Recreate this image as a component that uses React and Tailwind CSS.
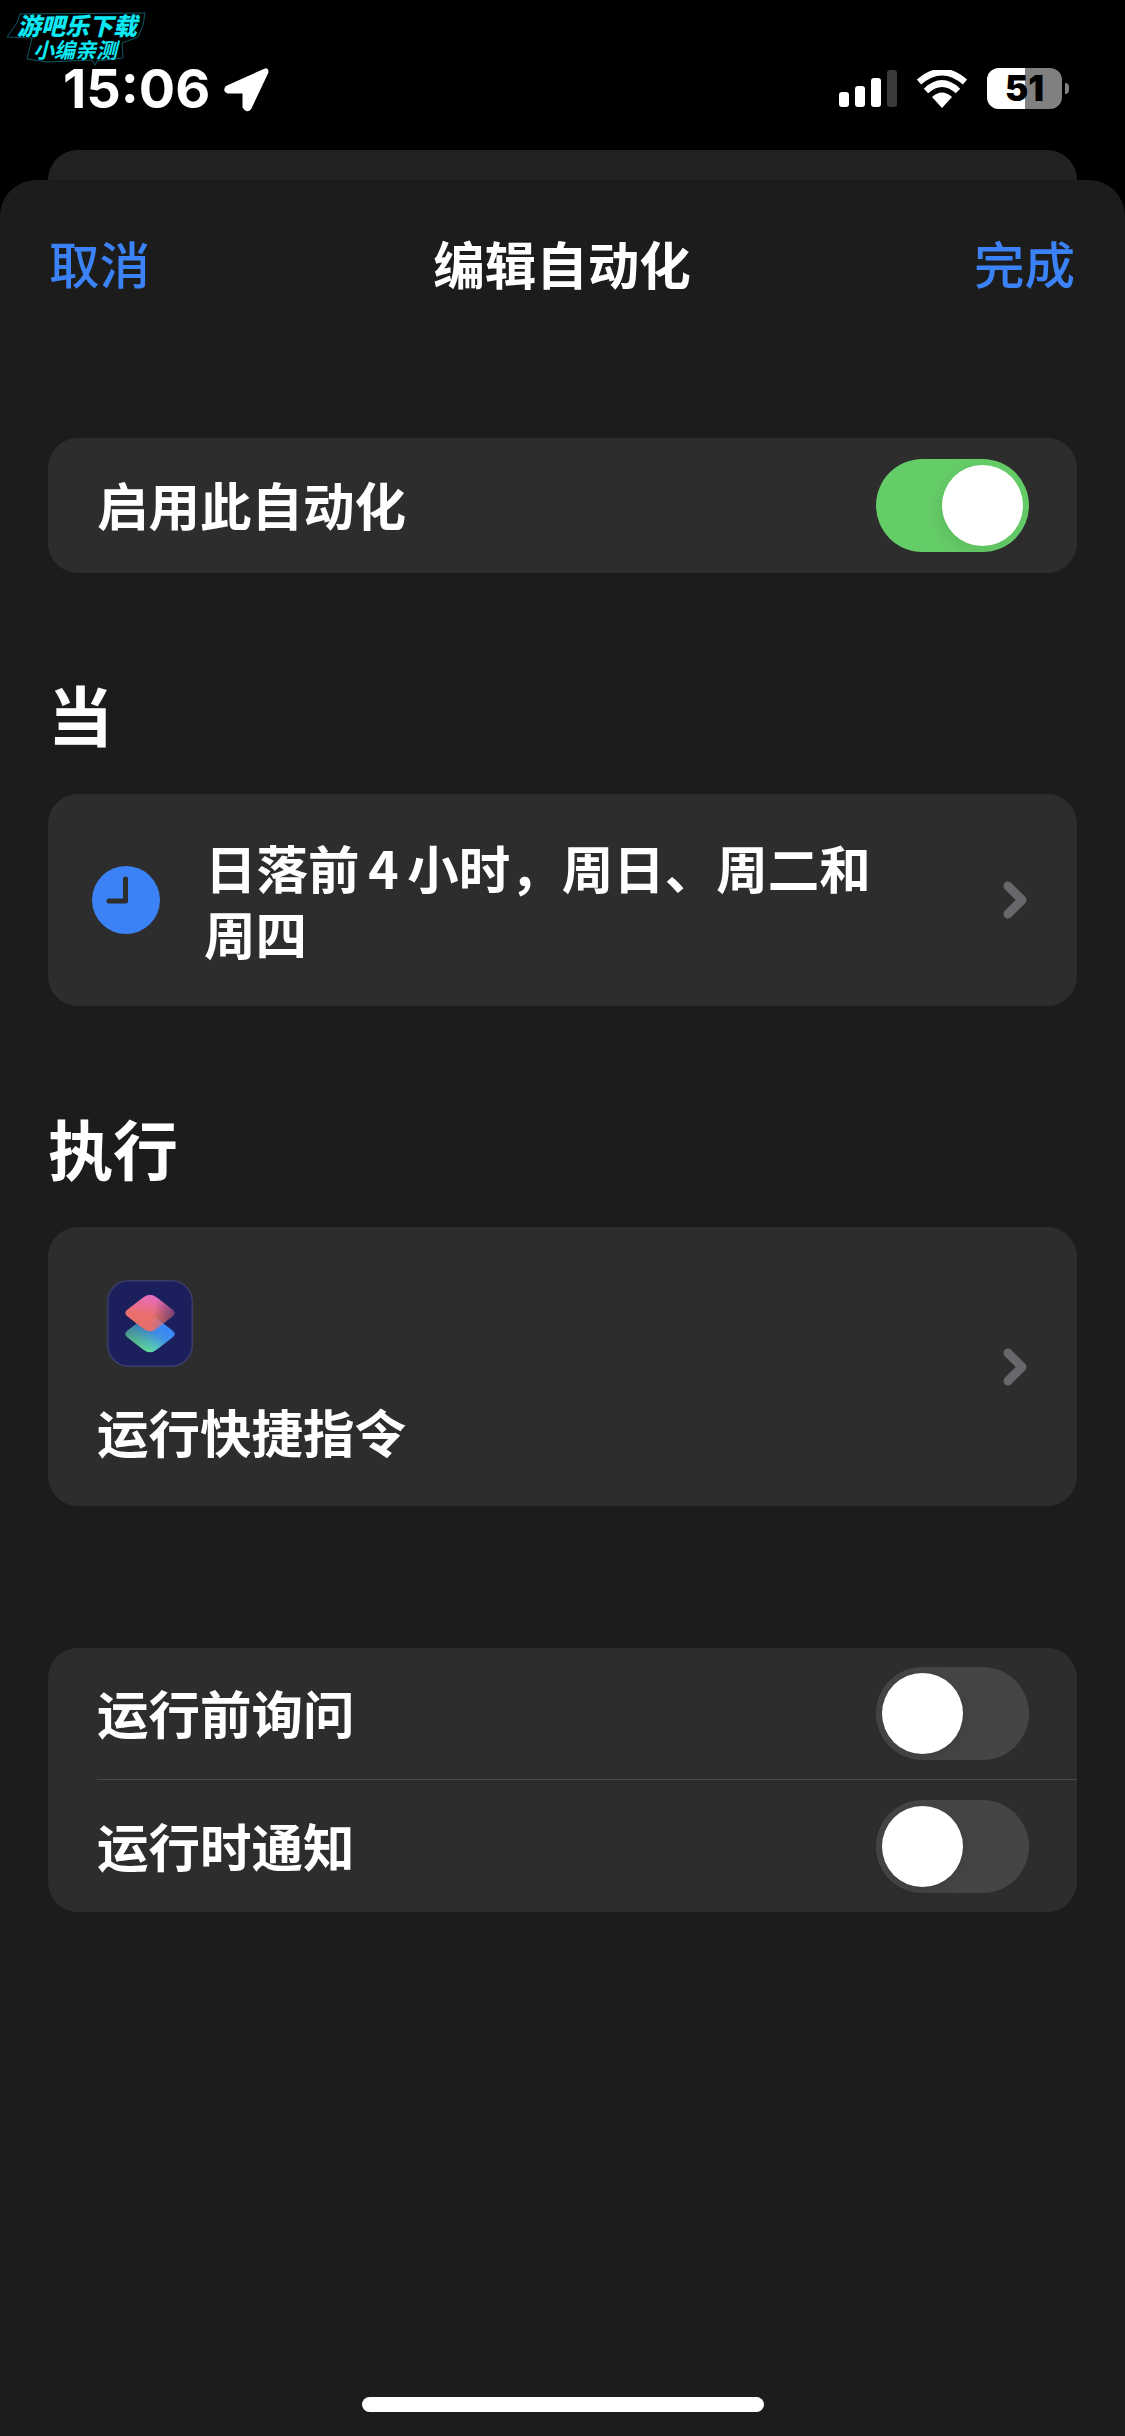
const CJK = '"Noto Sans CJK SC", "Noto Sans", sans-serif';

function Toggle({ on }) {
  return (
    <div className={`relative shrink-0 w-[153px] h-[93px] rounded-full ${on ? "bg-[#65cd68]" : "bg-[#454547]"}`}>
      <div
        className={`absolute top-[6px] w-[81px] h-[81px] rounded-full bg-white ${on ? "right-[6px] shadow-[-4px_6px_16px_rgba(0,0,0,0.08)]" : "left-[6px] shadow-[2px_4px_14px_rgba(0,0,0,0.1)]"}`}
      />
    </div>
  );
}

function Chevron() {
  return (
    <svg width="24" height="38" viewBox="0 0 24 38" className="shrink-0">
      <path d="M5 5 L19 19 L5 33" fill="none" stroke="#68686c" strokeWidth="9" strokeLinecap="round" strokeLinejoin="round" />
    </svg>
  );
}

const DIAMOND = "M36 17.4 Q43 12 50 17.4 L65.5 29.5 Q70 33 65.5 36.5 L50 48.6 Q43 54 36 48.6 L20.5 36.5 Q16 33 20.5 29.5 Z";

function ShortcutsIcon() {
  return (
    <svg width="86" height="87" viewBox="0 0 86 87" className="shrink-0">
      <defs>
        <linearGradient id="top" gradientUnits="userSpaceOnUse" x1="43" y1="12" x2="36" y2="54">
          <stop offset="0" stopColor="#e56cd0" />
          <stop offset="0.55" stopColor="#ea6f6c" />
          <stop offset="1" stopColor="#e0706a" />
        </linearGradient>
        <linearGradient id="topFade" gradientUnits="userSpaceOnUse" x1="30" y1="30" x2="70" y2="40">
          <stop offset="0" stopColor="#fff" />
          <stop offset="0.4" stopColor="#fff" />
          <stop offset="1" stopColor="#555" />
        </linearGradient>
        <mask id="topMask" maskUnits="userSpaceOnUse" x="0" y="0" width="86" height="87">
          <rect width="86" height="87" fill="url(#topFade)" />
        </mask>
        <linearGradient id="bottom" gradientUnits="userSpaceOnUse" x1="60" y1="29" x2="42" y2="53">
          <stop offset="0" stopColor="#3a88f6" />
          <stop offset="0.3" stopColor="#3f8fe8" />
          <stop offset="1" stopColor="#68ea9c" />
        </linearGradient>
        <linearGradient id="bottomFade" gradientUnits="userSpaceOnUse" x1="16" y1="50" x2="50" y2="60">
          <stop offset="0" stopColor="#999" />
          <stop offset="1" stopColor="#fff" />
        </linearGradient>
        <mask id="bottomMask" maskUnits="userSpaceOnUse" x="0" y="0" width="86" height="87">
          <rect width="86" height="87" fill="url(#bottomFade)" />
        </mask>
      </defs>
      <rect x="0.75" y="0.75" width="84.5" height="85.5" rx="21" fill="#1b1f5c" stroke="#3b3d68" strokeWidth="1.5" />
      <g mask="url(#bottomMask)">
        <path d={DIAMOND} transform="translate(0 21)" fill="url(#bottom)" />
      </g>
      <g mask="url(#topMask)">
        <path d={DIAMOND} fill="url(#top)" />
      </g>
    </svg>
  );
}

function StatusBar() {
  return (
    <div className="relative h-[150px] flex items-start justify-between pt-[60px] pl-[63px] pr-[56px]">
      <div className="absolute left-0 top-0 w-[150px] h-[68px]">
        <svg width="150" height="68" viewBox="0 0 150 68" className="absolute left-0 top-0">
          <path
            d="M20 14 L145 13 L143 25 L138 37 L122 43 L123 58 L97 61 L95 65 L92 60 L47 62 L27 59 L32 38 L7 37 L17 23 Z"
            fill="#000"
            stroke="#0b5a66"
            strokeWidth="1"
          />
        </svg>
        <div
          className="absolute left-[17px] top-[12px] text-[24px] leading-[26px] font-black italic text-[#0ee8f5] whitespace-nowrap"
          style={{ fontFamily: CJK }}
        >
          游吧乐下载
        </div>
        <div
          className="absolute left-[33px] top-[38px] text-[21px] leading-[22px] font-bold italic text-[#0ee8f5] whitespace-nowrap"
          style={{ fontFamily: CJK }}
        >
          小编亲测
        </div>
      </div>
      <div className="flex items-center gap-[13px] mt-[1px]">
        <span className="text-white text-[54px] leading-[56px] font-bold font-['Inter']">15:06</span>
        <svg width="46" height="46" viewBox="0 0 46 46">
          <path
            d="M42 4 L4 21 Q1 25 5 26 L21 26 L21 41 Q24 46 27 42 L44 6 Q44 3 42 4 Z"
            fill="#fff"
            stroke="#fff"
            strokeWidth="3"
            strokeLinejoin="round"
          />
        </svg>
      </div>
      <div className="flex items-start gap-[19px] pt-[8px]">
        <svg width="58" height="38" viewBox="0 0 58 38" className="mt-[2px]">
          <rect x="0" y="22" width="10" height="15" rx="3" fill="#fff" />
          <rect x="16" y="16" width="10" height="21" rx="3" fill="#fff" />
          <rect x="32" y="8" width="10" height="29" rx="3" fill="#fff" />
          <rect x="48" y="0" width="10" height="37" rx="3" fill="#3a3a3a" />
        </svg>
        <svg width="52" height="38" viewBox="0 0 52 38" className="mt-[2px]">
          <path d="M26 38 L16 27 Q26 18 36 27 Z" fill="#fff" />
          <path d="M10 21 Q26 6 42 21" fill="none" stroke="#fff" strokeWidth="6.5" />
          <path d="M3 12 Q26 -8 49 12" fill="none" stroke="#fff" strokeWidth="6.5" />
        </svg>
        <div className="flex items-center">
          <div className="relative w-[75px] h-[41px] rounded-[12px] overflow-hidden bg-[#808080] flex items-center justify-center">
            <div className="absolute left-0 top-0 bottom-0 w-[38px] bg-white" />
            <span className="relative text-black text-[35px] leading-[41px] font-black font-['Inter']">51</span>
          </div>
          <div className="ml-[3px] w-[4px] h-[11px] rounded-r-full bg-[#808080]" />
        </div>
      </div>
    </div>
  );
}

function SectionHeading({ children }) {
  return (
    <div className="mx-[48px] text-white text-[65px] leading-[88px] font-bold" style={{ fontFamily: CJK }}>
      {children}
    </div>
  );
}

const LABEL = "text-white text-[51.5px] leading-[70px] font-semibold pb-[3px]";

export default function App() {
  return (
    <div className="w-[1125px] h-[2436px] bg-black overflow-hidden flex flex-col" style={{ fontFamily: CJK }}>
      <StatusBar />
      <div className="h-[30px] mx-[48px] rounded-t-[30px] bg-[#222222] shrink-0" />
      <div className="relative flex-1 rounded-t-[36px] bg-[#1c1c1c] flex flex-col">
        <div className="flex items-center justify-between pt-[46px] pb-[3px] pl-[49px] pr-[50px]">
          <span className="text-[#3a82f6] text-[50.5px] leading-[73px] font-medium">取消</span>
          <span className="text-white text-[51.5px] leading-[73px] font-semibold">编辑自动化</span>
          <span className="text-[#3a82f6] text-[50.5px] leading-[73px] font-medium">完成</span>
        </div>

        <div className="mt-[136px] mx-[48px] h-[135px] rounded-[30px] bg-[#2d2d2d] flex items-center justify-between pl-[49px] pr-[48px]">
          <span className={LABEL}>启用此自动化</span>
          <Toggle on />
        </div>

        <div className="mt-[96px]"><SectionHeading>当</SectionHeading></div>

        <div className="mt-[37px] mx-[48px] h-[212px] rounded-[30px] bg-[#2d2d2d] flex items-center pl-[44px] pr-[50px]">
          <div className="w-[68px] h-[68px] rounded-full bg-[#3a82f6] shrink-0 flex items-center justify-center">
            <svg width="68" height="68" viewBox="0 0 68 68">
              <path d="M33.5 13 L33.5 35 L17 35" fill="none" stroke="#2d2d2d" strokeWidth="5" strokeLinecap="round" strokeLinejoin="round" />
            </svg>
          </div>
          <div className="ml-[44px] flex-1 text-white text-[51.5px] leading-[66px] font-semibold max-w-[680px]">
            <div className="pl-[1px] whitespace-nowrap [word-spacing:-3px]">日落前 4 小时，周日、周二和</div>
            <div>周四</div>
          </div>
          <div className="ml-auto"><Chevron /></div>
        </div>

        <div className="mt-[97px]"><SectionHeading>执行</SectionHeading></div>

        <div className="mt-[36px] mx-[48px] h-[279px] rounded-[30px] bg-[#2d2d2d] flex items-center pl-[49px] pr-[50px]">
          <div className="flex flex-col pt-[15px]">
            <div className="pl-[10px]"><ShortcutsIcon /></div>
            <span className={`mt-[29px] ${LABEL}`}>运行快捷指令</span>
          </div>
          <div className="ml-auto"><Chevron /></div>
        </div>

        <div className="mt-[142px] mx-[48px] rounded-[30px] bg-[#2d2d2d] flex flex-col">
          <div className="h-[131px] flex items-center justify-between pl-[49px] pr-[48px]">
            <span className={LABEL}>运行前询问</span>
            <Toggle />
          </div>
          <div className="ml-[49px] h-px bg-[#4a4a4c]" />
          <div className="h-[132px] flex items-center justify-between pl-[49px] pr-[48px]">
            <span className={LABEL}>运行时通知</span>
            <Toggle />
          </div>
        </div>

        <div className="absolute bottom-[24px] left-[362px] w-[402px] h-[15px] rounded-full bg-white" />
      </div>
    </div>
  );
}
